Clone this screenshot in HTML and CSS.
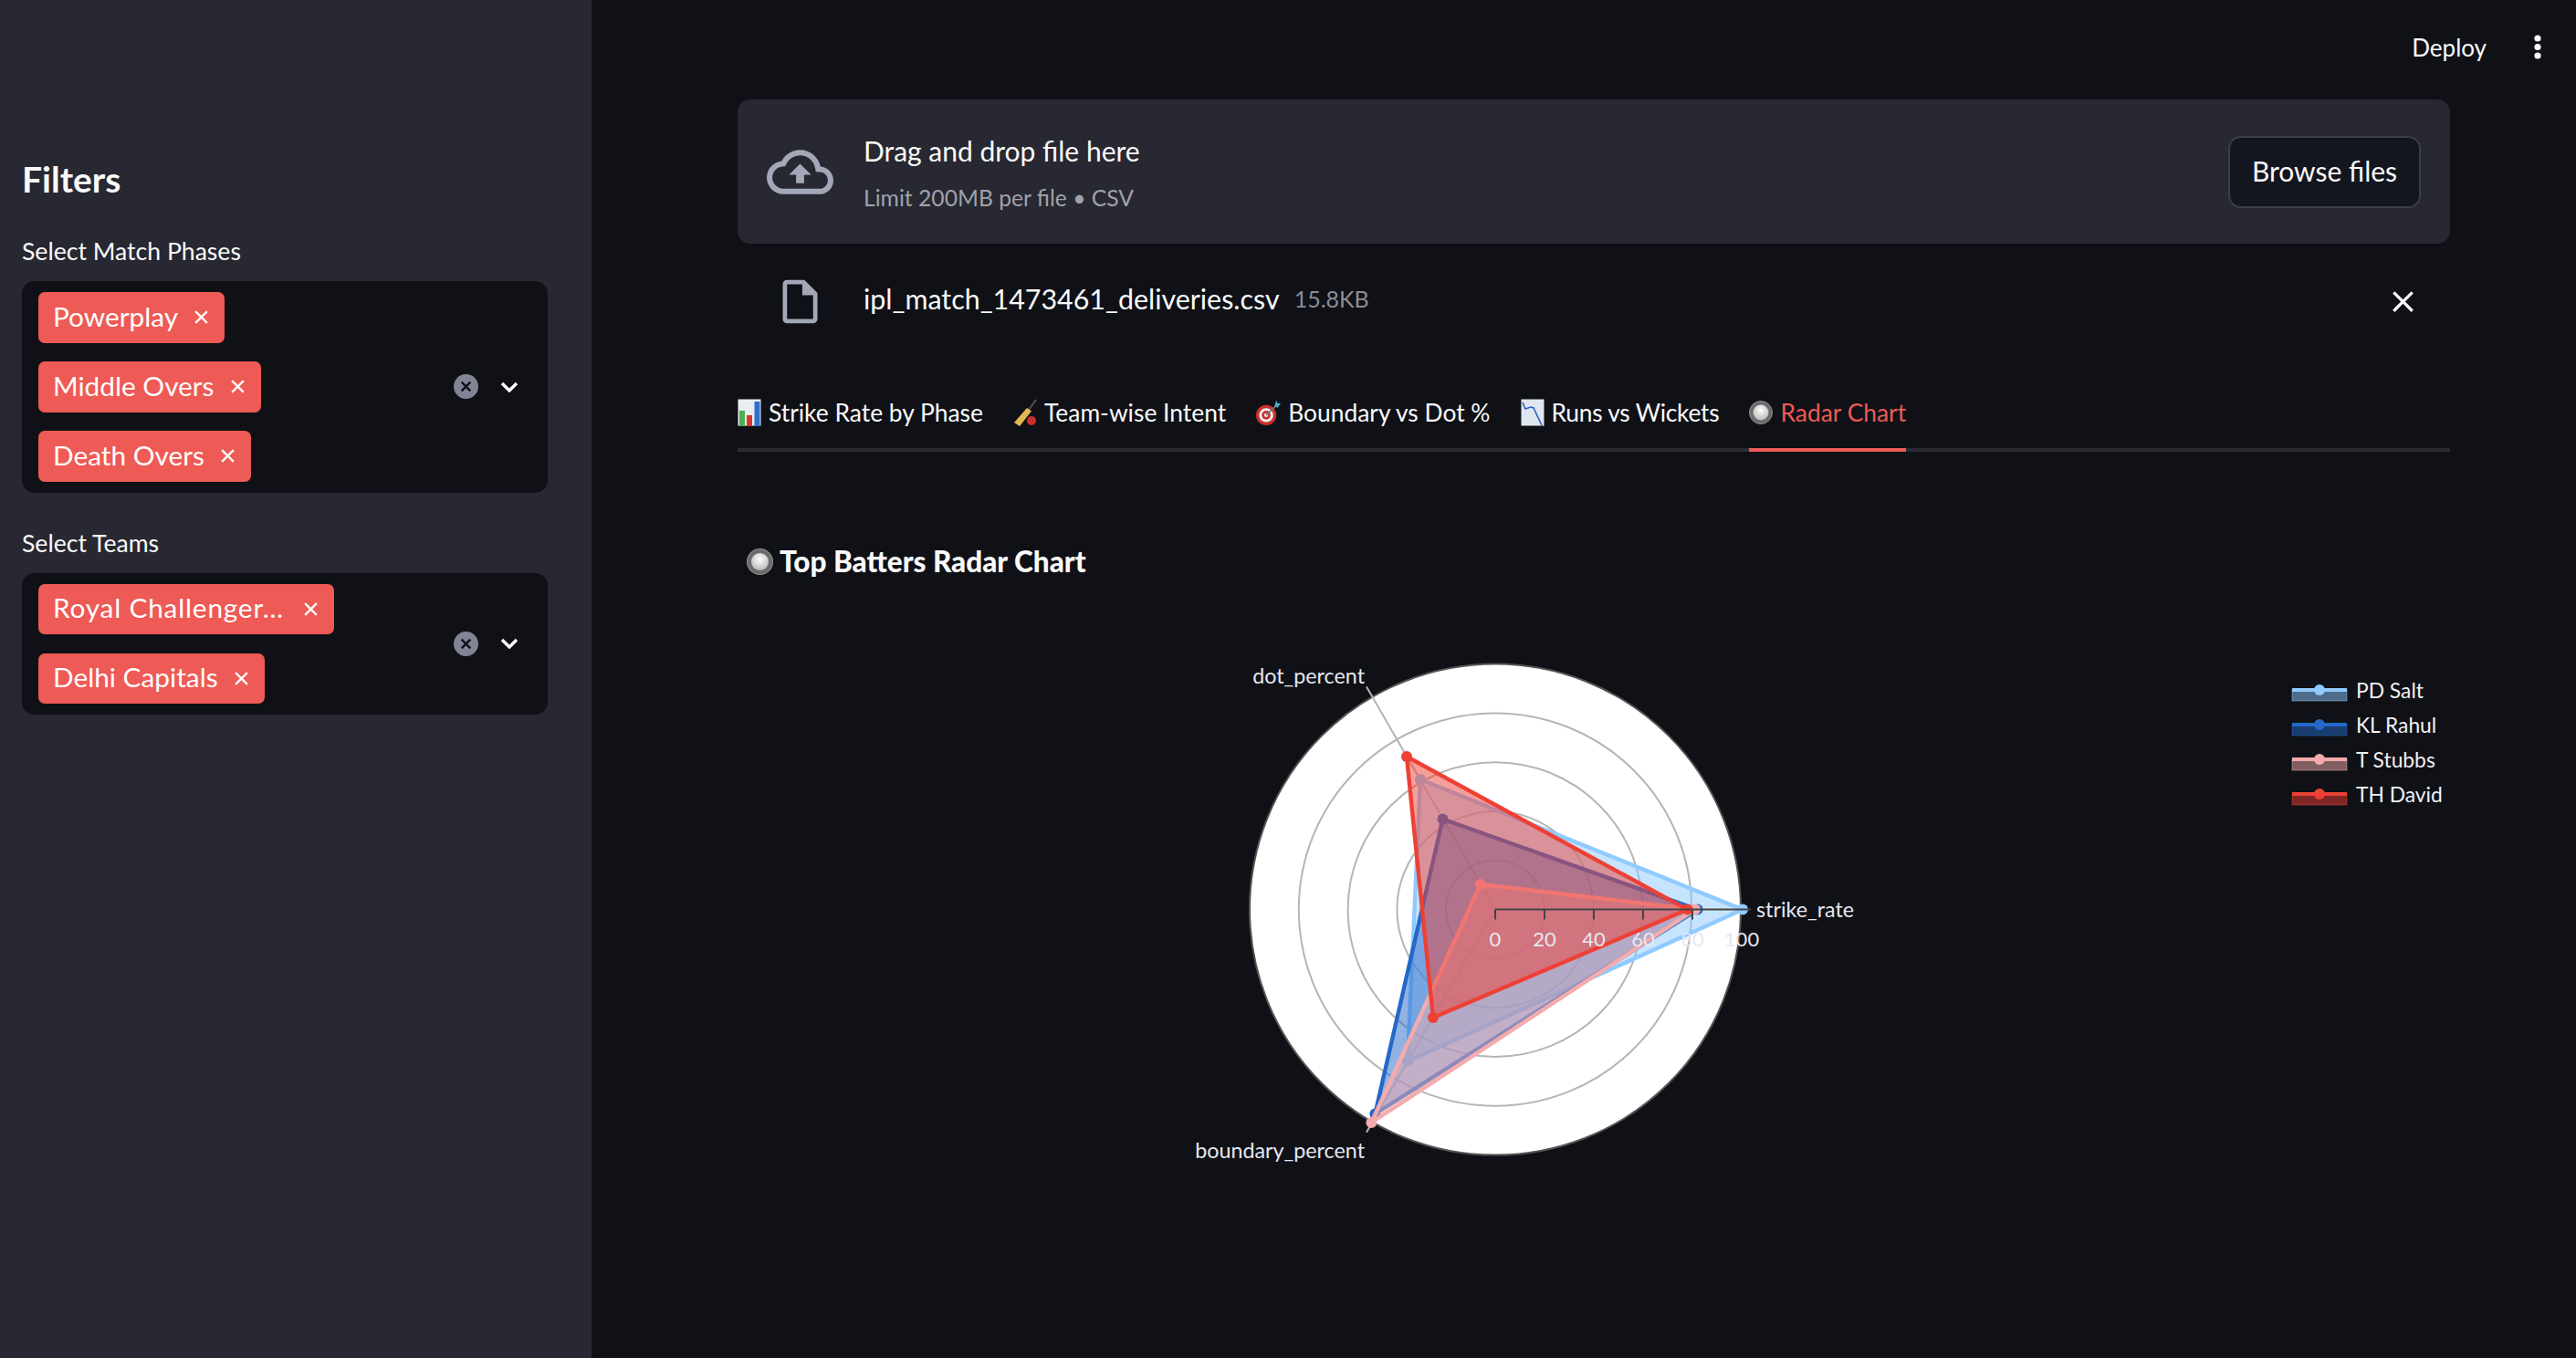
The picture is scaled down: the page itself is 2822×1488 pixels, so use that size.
FILE: index.html
```html
<!DOCTYPE html>
<html>
    <head>
        <meta charset="UTF-8">
        <title>Top Batters</title>
        <link rel="stylesheet" href="styles.css">
    </head>

    <body>
        <div class="app">
            <aside class="sidebar">
                <h2 class="sidebar-title">Filters</h2>

                <div class="field-label">Select Match Phases</div>
                <div class="select">
                    <div class="tags">
                        <span class="tag"><span class="tag-text">Powerplay</span><svg viewBox="0 0 16 16"><path d="M2 2l12 12M14 2L2 14"/></svg></span>
                        <span class="tag"><span class="tag-text">Middle Overs</span><svg viewBox="0 0 16 16"><path d="M2 2l12 12M14 2L2 14"/></svg></span>
                        <span class="tag"><span class="tag-text">Death Overs</span><svg viewBox="0 0 16 16"><path d="M2 2l12 12M14 2L2 14"/></svg></span>
                    </div>
                    <svg class="clear" viewBox="0 0 28 28"><circle cx="14" cy="14" r="14"/><path d="M9 9l10 10M19 9L9 19"/></svg>
                    <svg class="chevron" viewBox="0 0 20 12"><path d="M2 2l8 8 8-8"/></svg>
                </div>

                <div class="field-label second">Select Teams</div>
                <div class="select">
                    <div class="tags">
                        <span class="tag tag-long"><span class="tag-text">Royal Challenger…</span><svg viewBox="0 0 16 16"><path d="M2 2l12 12M14 2L2 14"/></svg></span>
                        <span class="tag"><span class="tag-text">Delhi Capitals</span><svg viewBox="0 0 16 16"><path d="M2 2l12 12M14 2L2 14"/></svg></span>
                    </div>
                    <svg class="clear" viewBox="0 0 28 28"><circle cx="14" cy="14" r="14"/><path d="M9 9l10 10M19 9L9 19"/></svg>
                    <svg class="chevron" viewBox="0 0 20 12"><path d="M2 2l8 8 8-8"/></svg>
                </div>
            </aside>

            <main class="main">
                <header class="toolbar">
                    <span class="deploy">Deploy</span>
                    <svg class="kebab" viewBox="0 0 8 28"><circle cx="4" cy="4" r="3.6"/><circle cx="4" cy="13.5" r="3.6"/><circle cx="4" cy="23" r="3.6"/></svg>
                </header>

                <section class="content">
                    <div class="uploader">
                        <svg class="cloud" viewBox="0 0 24 24"><path d="M19.35 10.04C18.67 6.59 15.64 4 12 4 9.11 4 6.6 5.64 5.35 8.04 2.34 8.36 0 10.91 0 14c0 3.31 2.69 6 6 6h13c2.76 0 5-2.24 5-5 0-2.64-2.05-4.78-4.65-4.96zM19 18H6c-2.21 0-4-1.79-4-4 0-2.05 1.53-3.76 3.56-3.97l1.07-.11.5-.95C8.08 7.14 9.94 6 12 6c2.62 0 4.88 1.86 5.39 4.43l.3 1.5 1.53.11c1.56.1 2.78 1.41 2.78 2.96 0 1.65-1.35 3-3 3zM8 13h2.55v3h2.9v-3H16l-4-4z"/></svg>
                        <div class="drop-text">
                            <div class="drop-title">Drag and drop file here</div>
                            <div class="drop-limit">Limit 200MB per file • CSV</div>
                        </div>
                        <button class="browse" type="button">Browse files</button>
                    </div>

                    <div class="file-row">
                        <svg class="file-icon" viewBox="0 0 24 24"><path d="M14 2H6c-1.1 0-1.99.9-1.99 2L4 20c0 1.1.89 2 1.99 2H18c1.1 0 2-.9 2-2V8l-6-6zM6 20V4h7v5h5v11H6z"/></svg>
                        <span class="file-name">ipl_match_1473461_deliveries.csv</span>
                        <span class="file-size">15.8KB</span>
                        <svg class="file-close" viewBox="0 0 24 24"><path d="M19 6.41L17.59 5 12 10.59 6.41 5 5 6.41 10.59 12 5 17.59 6.41 19 12 13.41 17.59 19 19 17.59 13.41 12z"/></svg>
                    </div>

                    <nav class="tabs">
                        <div class="tab">
                            <svg class="emoji" viewBox="0 0 26 30"><rect x="0.5" y="0.5" width="25" height="29" fill="#e8edf2"/><rect x="2" y="13" width="6" height="17" fill="#4caf50"/><rect x="10" y="18" width="6" height="12" fill="#d8342c"/><rect x="18.5" y="3" width="6" height="27" fill="#2f6fd0"/></svg>
                            Strike Rate by Phase
                        </div>
                        <div class="tab">
                            <svg class="emoji" viewBox="0 0 26 30"><path d="M25 1l-8 11" stroke="#55504a" stroke-width="2" fill="none"/><path d="M15 10l5 3.5L7 30l-6-4z" fill="#e2b84f"/><circle cx="20" cy="24" r="5" fill="#c9302c"/></svg>
                            Team-wise Intent
                        </div>
                        <div class="tab">
                            <svg class="emoji wide" viewBox="0 0 28 30"><circle cx="11.5" cy="18" r="11.5" fill="#c9302c"/><circle cx="11.5" cy="18" r="8" fill="#f4f0ee"/><circle cx="11.5" cy="18" r="5" fill="#c9302c"/><circle cx="11.5" cy="18" r="2.2" fill="#f4f0ee"/><path d="M11.5 18L24 6" stroke="#6a7a80" stroke-width="2"/><path d="M21 8l2-7 1.5 3.5 3.5 0-3.5 5z" fill="#49b0c4"/></svg>
                            Boundary vs Dot %
                        </div>
                        <div class="tab tight">
                            <svg class="emoji" viewBox="0 0 26 30"><rect x="0.5" y="0.5" width="25" height="29" fill="#dfe6ef"/><path d="M2 4l3 7 6-2 3 1 9 19" stroke="#2a62c4" stroke-width="1.6" fill="none"/></svg>
                            Runs vs Wickets
                        </div>
                        <div class="tab active">
                            <svg class="emoji" viewBox="0 0 26 26"><use href="#radio-ball"/></svg>
                            Radar Chart
                        </div>
                    </nav>

                    <h3 class="chart-title">
                        <svg class="emoji-big" viewBox="0 0 26 26">
                            <defs>
                                <radialGradient id="ball" cx="0.5" cy="0.35" r="0.7"><stop offset="0" stop-color="#ffffff"/><stop offset="1" stop-color="#b4b4b4"/></radialGradient>
                                <g id="radio-ball"><circle cx="13" cy="13" r="12.5" fill="#6b6b6b"/><circle cx="13" cy="13" r="12.5" fill="none" stroke="#8f8f8f" stroke-width="1"/><circle cx="13" cy="13" r="8.5" fill="url(#ball)"/></g>
                            </defs>
                            <use href="#radio-ball"/>
                        </svg>
                        Top Batters Radar Chart
                    </h3>

                    <svg class="chart" viewBox="808 680 1876 640">
                        <!-- polar background, rings and spokes -->
                        <circle class="plot-bg" cx="1638" cy="996.6" r="269"/>
                        <circle class="ring" cx="1638" cy="996.6" r="53.8"/>
                        <circle class="ring" cx="1638" cy="996.6" r="107.6"/>
                        <circle class="ring" cx="1638" cy="996.6" r="161.4"/>
                        <circle class="ring" cx="1638" cy="996.6" r="215.2"/>
                        <path class="ring" d="M1638 996.6L1497 752.4M1638 996.6L1497 1240.8"/>

                        <!-- traces -->
                        <g class="trace salt">
                            <polygon points="1909,996.6 1556,854 1542,1163"/>
                            <circle cx="1909" cy="996.6" r="6"/><circle cx="1556" cy="854" r="6"/><circle cx="1542" cy="1163" r="6"/>
                        </g>
                        <g class="trace rahul">
                            <polygon points="1859.6,996.6 1580.5,897.5 1506.4,1220.5"/>
                            <circle cx="1859.6" cy="996.6" r="6"/><circle cx="1580.5" cy="897.5" r="6"/><circle cx="1506.4" cy="1220.5" r="6"/>
                        </g>
                        <g class="trace stubbs">
                            <polygon points="1857,996.6 1621.8,969 1502.4,1230"/>
                            <circle cx="1857" cy="996.6" r="6"/><circle cx="1621.8" cy="969" r="6"/><circle cx="1502.4" cy="1230" r="6"/>
                        </g>
                        <g class="trace david">
                            <polygon points="1848.7,996.6 1541,829 1570,1115"/>
                            <circle cx="1848.7" cy="996.6" r="6"/><circle cx="1541" cy="829" r="6"/><circle cx="1570" cy="1115" r="6"/>
                        </g>

                        <!-- radial axis -->
                        <path class="axis" d="M1638 996.6H1918M1638 996.6v11M1692 996.6v11M1746 996.6v11M1800 996.6v11M1854 996.6v11"/>
                        <text class="tick" x="1638" y="1037">0</text>
                        <text class="tick" x="1692" y="1037">20</text>
                        <text class="tick" x="1746" y="1037">40</text>
                        <text class="tick" x="1800" y="1037">60</text>
                        <text class="tick" x="1854" y="1037">80</text>
                        <text class="tick" x="1908" y="1037">100</text>

                        <text class="axis-label" x="1924" y="1005">strike_rate</text>
                        <text class="axis-label end" x="1495" y="749">dot_percent</text>
                        <text class="axis-label end" x="1495" y="1269">boundary_percent</text>

                        <!-- legend -->
                        <g class="trace salt legend-key"><rect x="2511" y="756" width="60" height="12"/><path d="M2511 756h60"/><circle cx="2541" cy="756" r="6"/></g>
                        <g class="trace rahul legend-key"><rect x="2511" y="794" width="60" height="12"/><path d="M2511 794h60"/><circle cx="2541" cy="794" r="6"/></g>
                        <g class="trace stubbs legend-key"><rect x="2511" y="832" width="60" height="12"/><path d="M2511 832h60"/><circle cx="2541" cy="832" r="6"/></g>
                        <g class="trace david legend-key"><rect x="2511" y="870" width="60" height="12"/><path d="M2511 870h60"/><circle cx="2541" cy="870" r="6"/></g>
                        <text class="legend" x="2581" y="765">PD Salt</text>
                        <text class="legend" x="2581" y="803">KL Rahul</text>
                        <text class="legend" x="2581" y="841">T Stubbs</text>
                        <text class="legend" x="2581" y="879">TH David</text>
                    </svg>
                </section>
            </main>
        </div>
    </body>
</html>
```

FILE: styles.css
```css
* {
    margin: 0;
    box-sizing: border-box;
}
body {
    background-color: #0f1116;
    color: #fafafa;
    font-family: "Lato", "Noto Sans", sans-serif;
    height: 1488px;
    overflow: hidden;
}
.app {
    display: flex;
    height: 100%;
}

/* sidebar */
.sidebar {
    width: 648px;
    flex-shrink: 0;
    background-color: #272831;
    padding: 171px 48px 0 24px;
}
.sidebar-title {
    font-size: 39px;
    font-weight: 700;
    line-height: 50px;
}
.field-label {
    font-size: 26.6px;
    line-height: 36px;
    margin-top: 36px;
    margin-bottom: 15px;
}
.field-label.second {
    margin-top: 37px;
}
.select {
    display: flex;
    align-items: center;
    background-color: #0f1116;
    border-radius: 14px;
    padding: 12px 32px 12px 18px;
}
.tags {
    flex: 1;
    display: flex;
    flex-direction: column;
    align-items: flex-start;
    gap: 20.5px;
}
.tag {
    display: inline-flex;
    align-items: center;
    justify-content: space-between;
    height: 55.5px;
    padding: 0 17px 3px 16px;
    gap: 17px;
    background-color: #ee5a55;
    border-radius: 7px;
    color: #fff;
    font-size: 29.8px;
    white-space: nowrap;
}
.tag-long {
    width: 324px;
    letter-spacing: 0.8px;
}
.tag svg {
    width: 17px;
    height: 17px;
    flex-shrink: 0;
    margin-top: 3px;
}
.tag path {
    stroke: #fff;
    stroke-width: 2.2;
    fill: none;
}
.clear {
    width: 27px;
    height: 27px;
    margin-right: 24px;
}
.clear circle {
    fill: #808495;
}
.clear path {
    stroke: #0f1116;
    stroke-width: 2.6;
    fill: none;
}
.chevron {
    width: 20px;
    height: 12px;
}
.chevron path {
    stroke: #fff;
    stroke-width: 3.4;
    fill: none;
}

/* main area */
.main {
    flex: 1;
    min-width: 0;
}
.toolbar {
    height: 109px;
    display: flex;
    justify-content: flex-end;
    align-items: flex-start;
    padding: 31px 38px 0 0;
    gap: 52px;
}
.deploy {
    font-size: 26px;
    line-height: 42px;
}
.kebab {
    width: 8px;
    height: 28px;
    margin-top: 7px;
    fill: #fafafa;
}
.content {
    padding: 0 138px 0 160px;
}

/* uploader */
.uploader {
    display: flex;
    align-items: center;
    height: 158px;
    padding: 0 32px;
    background-color: #272831;
    border-radius: 14px;
}
.cloud {
    width: 73px;
    height: 73px;
    fill: #a3a8b8;
    flex-shrink: 0;
}
.drop-text {
    flex: 1;
    margin-left: 33px;
    padding-top: 5px;
}
.drop-title {
    font-size: 30px;
    line-height: 42px;
}
.drop-limit {
    font-size: 24.7px;
    line-height: 42px;
    margin-top: 10px;
    color: #a0a2ab;
}
.browse {
    width: 211px;
    height: 79px;
    padding-bottom: 3px;
    background-color: #14161f;
    border: 2px solid #3b3d47;
    border-radius: 14px;
    color: #fafafa;
    font-family: inherit;
    font-size: 30px;
}

/* uploaded file */
.file-row {
    display: flex;
    align-items: center;
    height: 127px;
    padding: 0 32px 0 40px;
}
.file-icon {
    width: 57px;
    height: 57px;
    fill: #a3a8b8;
}
.file-name {
    margin-left: 41px;
    margin-bottom: 7px;
    font-size: 30.4px;
}
.file-size {
    margin-left: 16px;
    margin-bottom: 7px;
    font-size: 25px;
    color: #8b8d96;
    flex: 1;
}
.file-close {
    width: 39px;
    height: 39px;
    fill: #fafafa;
}

/* tabs */
.tabs {
    display: flex;
    gap: 33px;
    height: 101px;
    border-bottom: 4px solid #2a2b33;
}
.tab {
    display: flex;
    align-items: center;
    gap: 8px;
    height: 101px;
    padding-top: 18px;
    font-size: 26.4px;
    border-bottom: 4px solid transparent;
    white-space: nowrap;
}
.tab.tight {
    letter-spacing: -0.25px;
}
.tab.active {
    color: #ee5a55;
    border-bottom-color: #ee5a55;
}
.emoji {
    width: 26px;
    height: 30px;
}
.emoji.wide {
    width: 27px;
}

/* chart */
.chart-title {
    display: flex;
    align-items: center;
    gap: 7px;
    height: 50px;
    margin-top: 95px;
    padding-left: 10px;
    font-size: 31.5px;
    font-weight: 900;
}
.emoji-big {
    width: 29px;
    height: 29px;
}
.chart {
    display: block;
    width: 1876px;
    height: 640px;
    margin-top: 39.5px;
}
.plot-bg {
    fill: #fff;
    stroke: #555;
    stroke-width: 2;
}
.ring {
    fill: none;
    stroke: #b5b5b5;
    stroke-width: 2;
}
.trace polygon {
    fill-opacity: 0.5;
    stroke-width: 4.4;
    stroke-linejoin: round;
}
.salt { --c: #90caff; }
.rahul { --c: #2468c8; }
.stubbs { --c: #f4abab; }
.david { --c: #ee4035; }
.trace polygon, .trace circle, .legend-key rect {
    fill: var(--c);
    stroke: var(--c);
}
.trace circle {
    stroke: none;
}
.legend-key rect {
    fill-opacity: 0.5;
    stroke-opacity: 0.5;
    stroke-width: 1;
}
.legend-key path {
    stroke: var(--c);
    stroke-width: 4;
}
.axis {
    fill: none;
    stroke: #444;
    stroke-width: 2;
}
.tick {
    fill: #e6e7f0;
    font-size: 22px;
    text-anchor: middle;
}
.axis-label {
    fill: #e6e7f0;
    font-size: 23.3px;
}
.axis-label.end {
    text-anchor: end;
}
.legend {
    fill: #f0f0f5;
    font-size: 22.8px;
}
```
